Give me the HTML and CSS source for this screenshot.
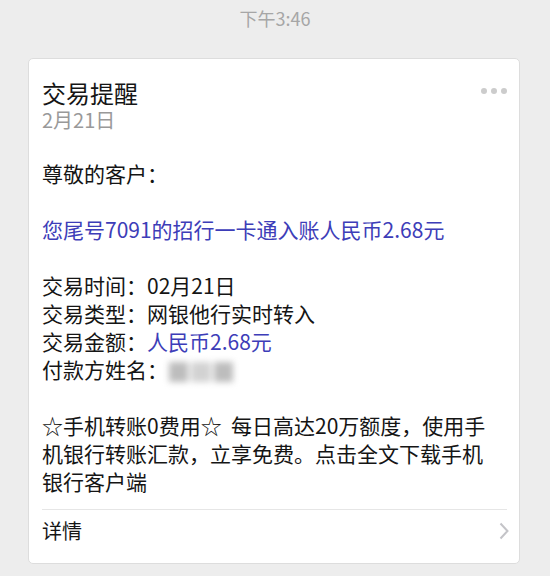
FILE: index.html
```html
<!DOCTYPE html>
<html lang="zh-CN">
<head>
<meta charset="utf-8">
<title>交易提醒</title>
<link rel="stylesheet" href="styles.css">
</head>
<body>
<div class="time">下午3:46</div>
<div class="card">
  <div class="head">
    <div class="titles">
      <div class="title">交易提醒</div>
      <div class="date">2月21日</div>
    </div>
    <div class="dots"><i></i><i></i><i></i></div>
  </div>
  <div class="body">
    <p>尊敬的客户：</p>
    <p class="blue">您尾号7091的招行一卡通入账人民币2.68元</p>
    <p>交易时间：02月21日<br>交易类型：网银他行实时转入<br>交易金额：<span class="blue">人民币2.68元</span><br>付款方姓名：<span class="blur"><i></i><i></i><i></i></span></p>
    <p class="promo">☆手机转账0费用☆&nbsp;&nbsp;每日高达20万额度，使用手机银行转账汇款，立享免费。点击全文下载手机银行客户端</p>
  </div>
  <div class="foot">
    <span>详情</span>
    <svg class="chev" width="10" height="18" viewBox="0 0 10 18"><polyline points="1.5,1.5 8.5,9 1.5,16.5" fill="none" stroke="#c4c4c8" stroke-width="2"/></svg>
  </div>
</div>
</body>
</html>
```
FILE: styles.css
```css
html, body {
  margin: 0;
  padding: 0;
  background: #ededed;
  font-family: "Noto Sans CJK SC", "Noto Sans", sans-serif;
  color: #151515;
}
.time {
  text-align: center;
  font-size: 18px;
  line-height: 22px;
  padding-top: 7px;
  color: #a6a6a6;
}
.card {
  margin: 29px 0 0 28px;
  width: 492px;
  background: #fff;
  border: 1px solid #dddddd;
  border-radius: 5px;
  padding: 0 12px 0 13px;
  box-sizing: border-box;
}
.head {
  display: flex;
  justify-content: space-between;
  padding-top: 20px;
}
.title {
  font-size: 24px;
  line-height: 28px;
}
.date {
  font-size: 20px;
  line-height: 24px;
  color: #999;
  margin-top: 1px;
}
.dots {
  display: flex;
  gap: 4px;
  margin-top: 9px;
  height: 6px;
}
.dots i {
  width: 6px;
  height: 6px;
  border-radius: 50%;
  background: #cccccc;
}
.body {
  margin-top: 27px;
  font-size: 21px;
  line-height: 28px;
}
.body p {
  margin: 0 0 28px;
}
.body .promo {
  margin-bottom: 14px;
  padding-right: 8px;
}
.blue {
  color: #3d3db8;
}
.blur {
  display: inline-flex;
  vertical-align: middle;
  gap: 3px;
  width: 64px;
  height: 20px;
  margin-left: 1px;
  filter: blur(3px);
}
.blur i {
  flex: 1;
  background: #bdbdbd;
}
.blur i:nth-child(2) {
  background: #d2d2d2;
}
.foot {
  border-top: 1px solid #e6e6e6;
  display: flex;
  justify-content: space-between;
  align-items: center;
  padding: 7px 0 18px;
  font-size: 20px;
  line-height: 28px;
}
.chev {
  margin-right: -2px;
}
```
